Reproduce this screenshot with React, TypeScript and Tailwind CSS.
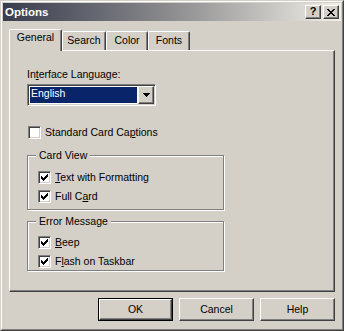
import React from 'react';

const raised =
    'border border-t-white border-l-white border-r-[#404040] border-b-[#404040] shadow-[inset_-1px_-1px_0_#808080]';
const sunken =
    'border border-t-[#808080] border-l-[#808080] border-r-white border-b-white shadow-[inset_1px_1px_0_#404040,inset_-1px_-1px_0_#d4d0c8]';

const Key: React.FC<{ children: React.ReactNode }> = ({ children }) => (
    <span className="underline underline-offset-[1px]">{children}</span>
);

const CheckBox: React.FC<{ checked?: boolean; children: React.ReactNode; className?: string }> = ({
    checked,
    children,
    className = '',
}) => (
    <div className={`flex items-center gap-[4px] h-[13px] ${className}`}>
        <div className={`w-[13px] h-[13px] bg-white p-[1px] ${sunken}`}>
            {checked && (
                <svg width="9" height="9" viewBox="0 0 9 9" shapeRendering="crispEdges" className="block">
                    <path
                        d="M7 1h1v1H7z M6 2h2v1H6z M1 3h1v1H1z M5 3h3v1H5z M1 4h2v1H1z M4 4h3v1H4z M1 5h5v1H1z M2 6h3v1H2z M3 7h1v1H3z"
                        fill="#000"
                    />
                </svg>
            )}
        </div>
        <span className="leading-[13px] whitespace-nowrap">{children}</span>
    </div>
);

const Group: React.FC<{ title: string; className?: string; children: React.ReactNode }> = ({
    title,
    className = '',
    children,
}) => (
    <div
        className={`relative w-[197px] border border-[#808080] shadow-[inset_1px_1px_0_white,1px_1px_0_white] pl-[10px] ${className}`}
    >
        <span className="absolute -top-[7px] left-[8px] px-[3px] bg-[#d4d0c8] leading-[13px]">{title}</span>
        {children}
    </div>
);

const Tab: React.FC<{ label: string; width: string; active?: boolean }> = ({ label, width, active }) =>
    active ? (
        <div
            className={`relative z-10 ${width} h-[22px] bg-[#d4d0c8] border-t border-l border-r border-t-white border-l-white border-r-[#404040] shadow-[inset_-1px_0_0_#808080] rounded-t-[2px] pt-[1px] text-center leading-[13px]`}
        >
            {label}
        </div>
    ) : (
        <div
            className={`${width} h-[19px] mb-px bg-[#d4d0c8] border-t border-l border-r border-t-white border-l-white border-r-[#404040] shadow-[inset_-1px_0_0_#808080] rounded-t-[2px] pt-[2px] text-center leading-[13px]`}
        >
            {label}
        </div>
    );

const Button: React.FC<{ label: string; isDefault?: boolean }> = ({ label, isDefault }) =>
    isDefault ? (
        <div className="w-[75px] h-[23px] border border-black">
            <div className={`h-full flex items-center justify-center leading-[13px] ${raised}`}>{label}</div>
        </div>
    ) : (
        <div className={`w-[75px] h-[23px] flex items-center justify-center leading-[13px] ${raised}`}>{label}</div>
    );

export default function App() {
    return (
        <div className="w-[344px] h-[331px] bg-[#d4d0c8] text-[10.5px] text-black font-['Liberation_Sans',Arial,sans-serif] border border-t-[#d4d0c8] border-l-[#d4d0c8] border-r-[#404040] border-b-[#404040]">
            <div className="h-full flex flex-col p-px border border-t-white border-l-white border-r-[#808080] border-b-[#808080]">
                {/* Title bar */}
                <div className="h-[18px] flex items-center pl-[2px] pr-[2px] bg-gradient-to-r from-[#393c4d] via-[#8d8d8f] to-[#f3f0e8]">
                    <span className="flex-1 text-white font-bold text-[11.5px] leading-[14px]">Options</span>
                    <div className="flex gap-[2px]">
                        <div className={`w-[16px] h-[14px] bg-[#d4d0c8] flex items-center justify-center ${raised}`}>
                            <span className="font-bold text-[11px] leading-[11px] -mt-px">?</span>
                        </div>
                        <div className={`w-[16px] h-[14px] bg-[#d4d0c8] flex items-center justify-center ${raised}`}>
                            <svg width="8" height="7" viewBox="0 0 8 7" shapeRendering="crispEdges">
                                <path
                                    d="M0 0h2v1H0z M6 0h2v1H6z M1 1h2v1H1z M5 1h2v1H5z M2 2h4v1H2z M3 3h2v1H3z M2 4h4v1H2z M1 5h2v1H1z M5 5h2v1H5z M0 6h2v1H0z M6 6h2v1H6z"
                                    fill="#000"
                                />
                            </svg>
                        </div>
                    </div>
                </div>

                {/* Client */}
                <div className="flex-1 px-[6px] pt-[8px]">
                    <div className="flex items-end">
                        <Tab label="General" width="w-[53px]" active />
                        <Tab label="Search" width="w-[44px]" />
                        <Tab label="Color" width="w-[42px]" />
                        <Tab label="Fonts" width="w-[42px]" />
                    </div>

                    <div className={`-mt-px h-[242px] pl-[17px] ${raised}`}>
                        <div className="mt-[17px] leading-[13px]">
                            In<Key>t</Key>erface Language:
                        </div>
                        <div className={`mt-[3px] w-[129px] h-[22px] bg-white p-[1px] flex ${sunken}`}>
                            <div className="flex-1 m-px bg-[#0a246a] text-white leading-[13px] pl-px">English</div>
                            <div className={`w-[16px] bg-[#d4d0c8] flex items-center justify-center ${raised}`}>
                                <svg width="7" height="4" viewBox="0 0 7 4" shapeRendering="crispEdges">
                                    <path d="M0 0h7v1H0z M1 1h5v1H1z M2 2h3v1H2z M3 3h1v1H3z" fill="#000" />
                                </svg>
                            </div>
                        </div>

                        <CheckBox className="mt-[20px] ml-px">
                            Standard Card Ca<Key>p</Key>tions
                        </CheckBox>

                        <Group title="Card View" className="mt-[16px] h-[55px] pt-[15px]">
                            <CheckBox checked>
                                <Key>T</Key>ext with Formatting
                            </CheckBox>
                            <CheckBox checked className="mt-[6px]">
                                Full C<Key>a</Key>rd
                            </CheckBox>
                        </Group>

                        <Group title="Error Message" className="mt-[11px] h-[50px] pt-[14px]">
                            <CheckBox checked>
                                <Key>B</Key>eep
                            </CheckBox>
                            <CheckBox checked className="mt-[6px]">
                                F<Key>l</Key>ash on Taskbar
                            </CheckBox>
                        </Group>
                    </div>

                    <div className="mt-[6px] flex justify-end gap-[6px]">
                        <Button label="OK" isDefault />
                        <Button label="Cancel" />
                        <Button label="Help" />
                    </div>
                </div>
            </div>
        </div>
    );
}
